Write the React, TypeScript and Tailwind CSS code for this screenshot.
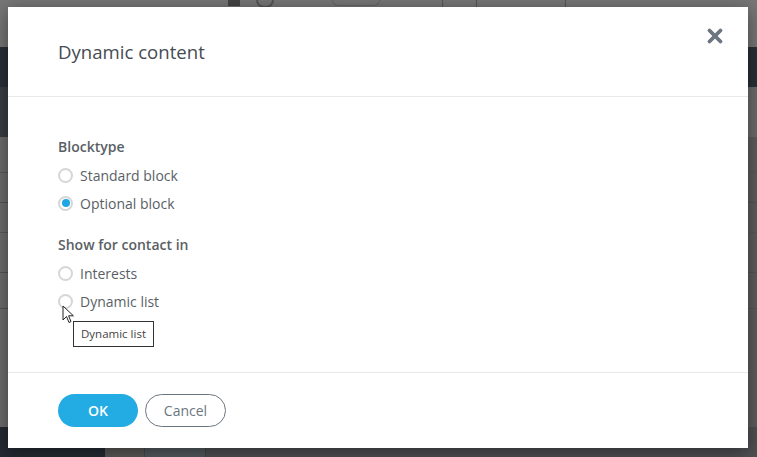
import { X } from "lucide-react"

const font = { fontFamily: '"Open Sans", "Noto Sans", sans-serif' }

function Radio({ checked, label }: { checked?: boolean; label: string }) {
  return (
    <label className="flex items-center h-[28px] gap-[7px] text-[14px] text-[#5a5f66]">
      <span className="w-[15px] h-[15px] rounded-full border-2 border-[#d4d6d8] bg-white flex items-center justify-center">
        {checked && <span className="w-[8px] h-[8px] rounded-full bg-[#1ea7e4]"></span>}
      </span>
      {label}
    </label>
  )
}

function Cursor() {
  return (
    <svg width="14" height="20" viewBox="0 0 14 20" className="absolute left-[54px] top-[208px]">
      <path d="M1 1 L1 15 L4.5 11.5 L7 17.5 L9 16.6 L6.6 10.8 L11.4 10.8 Z" fill="white" stroke="#222" strokeWidth="1" strokeLinejoin="round" />
    </svg>
  )
}

export default function App() {
  return (
    <div className="relative w-[757px] h-[457px] overflow-hidden bg-[#6c6c6c]" style={font}>
      {/* dimmed page behind */}
      <div className="flex flex-col h-full">
        <div className="h-[47px] bg-[#777777] flex items-start pl-[228px] gap-[16px] text-[#555] text-[13px]">
          <span className="w-[12px] h-[6px] bg-[#444] mt-0"></span>
          <span className="w-[18px] h-[8px] rounded-b-full border-2 border-t-0 border-[#555]"></span>
          <span className="ml-[42px] w-[48px] h-[6px] rounded-b-full border border-t-0 border-[#666]"></span>
          <span className="ml-[46px] w-[12px] h-[8px] border-l border-[#555]"></span>
          <span className="ml-[6px] w-[90px] h-[8px] border border-t-0 border-[#555]"></span>
        </div>
        <div className="h-[40px] bg-[#2a3038]"></div>
        <div className="h-[50px] bg-[#3a3f44] w-[8px]"></div>
        <div className="flex-1 flex flex-col bg-gradient-to-r from-[#6e6e6e] to-[#5e5e5e]">
          <div className="h-[36px] border-b border-[#5a5a5a]"></div>
          <div className="h-[30px] border-b border-[#555]"></div>
          <div className="h-[30px] border-b border-[#5a5a5a]"></div>
          <div className="h-[40px] border-b border-[#555]"></div>
          <div className="h-[36px] border-b border-[#555]"></div>
          <div className="flex-1"></div>
        </div>
        <div className="h-[30px] flex">
          <div className="w-[105px] bg-[#252b33]"></div>
          <div className="w-[40px] bg-[#5b5a59] border-r border-[#4a4a4a]"></div>
          <div className="w-[61px] bg-[#545b60] border-r border-[#444]"></div>
          <div className="flex-1 bg-[#4f5154]"></div>
        </div>
      </div>

      {/* modal */}
      <div className="absolute left-[8px] top-[7px] w-[740px] h-[441px] bg-white shadow-[0_4px_18px_rgba(0,0,0,0.45)] flex flex-col">
        <div className="h-[90px] border-b border-[#e8e8e8] flex items-start justify-between pl-[50px] pr-[22px]">
          <h2 className="mt-[31px] text-[18.6px] text-[#464b52] font-normal">Dynamic content</h2>
          <X className="mt-[18px] text-[#6c7680]" size={22} strokeWidth={4.2} />
        </div>
        <div className="flex-1 border-b border-[#e8e8e8] pl-[50px] pt-[40px] relative">
          <div className="text-[14px] font-semibold text-[#5a5f66] leading-[20px]">Blocktype</div>
          <div className="mt-[4px]">
            <Radio label="Standard block" />
            <Radio label="Optional block" checked />
          </div>
          <div className="mt-[18px] text-[14px] font-semibold text-[#5a5f66] leading-[20px]">Show for contact in</div>
          <div className="mt-[4px]">
            <Radio label="Interests" />
            <Radio label="Dynamic list" />
          </div>
          <Cursor />
          <div className="absolute left-[65px] top-[224px] h-[26px] px-[7px] border border-[#333] bg-white text-[11.5px] text-[#444] flex items-center">
            Dynamic list
          </div>
        </div>
        <div className="h-[75px] flex items-center gap-[7px] pl-[50px] pb-[1px]">
          <button className="w-[80px] h-[33px] rounded-full bg-[#22ace3] text-white text-[14px] font-semibold">OK</button>
          <button className="w-[81px] h-[33px] rounded-full border border-[#6c7680] text-[#6c7680] text-[14px]">Cancel</button>
        </div>
      </div>
    </div>
  )
}
